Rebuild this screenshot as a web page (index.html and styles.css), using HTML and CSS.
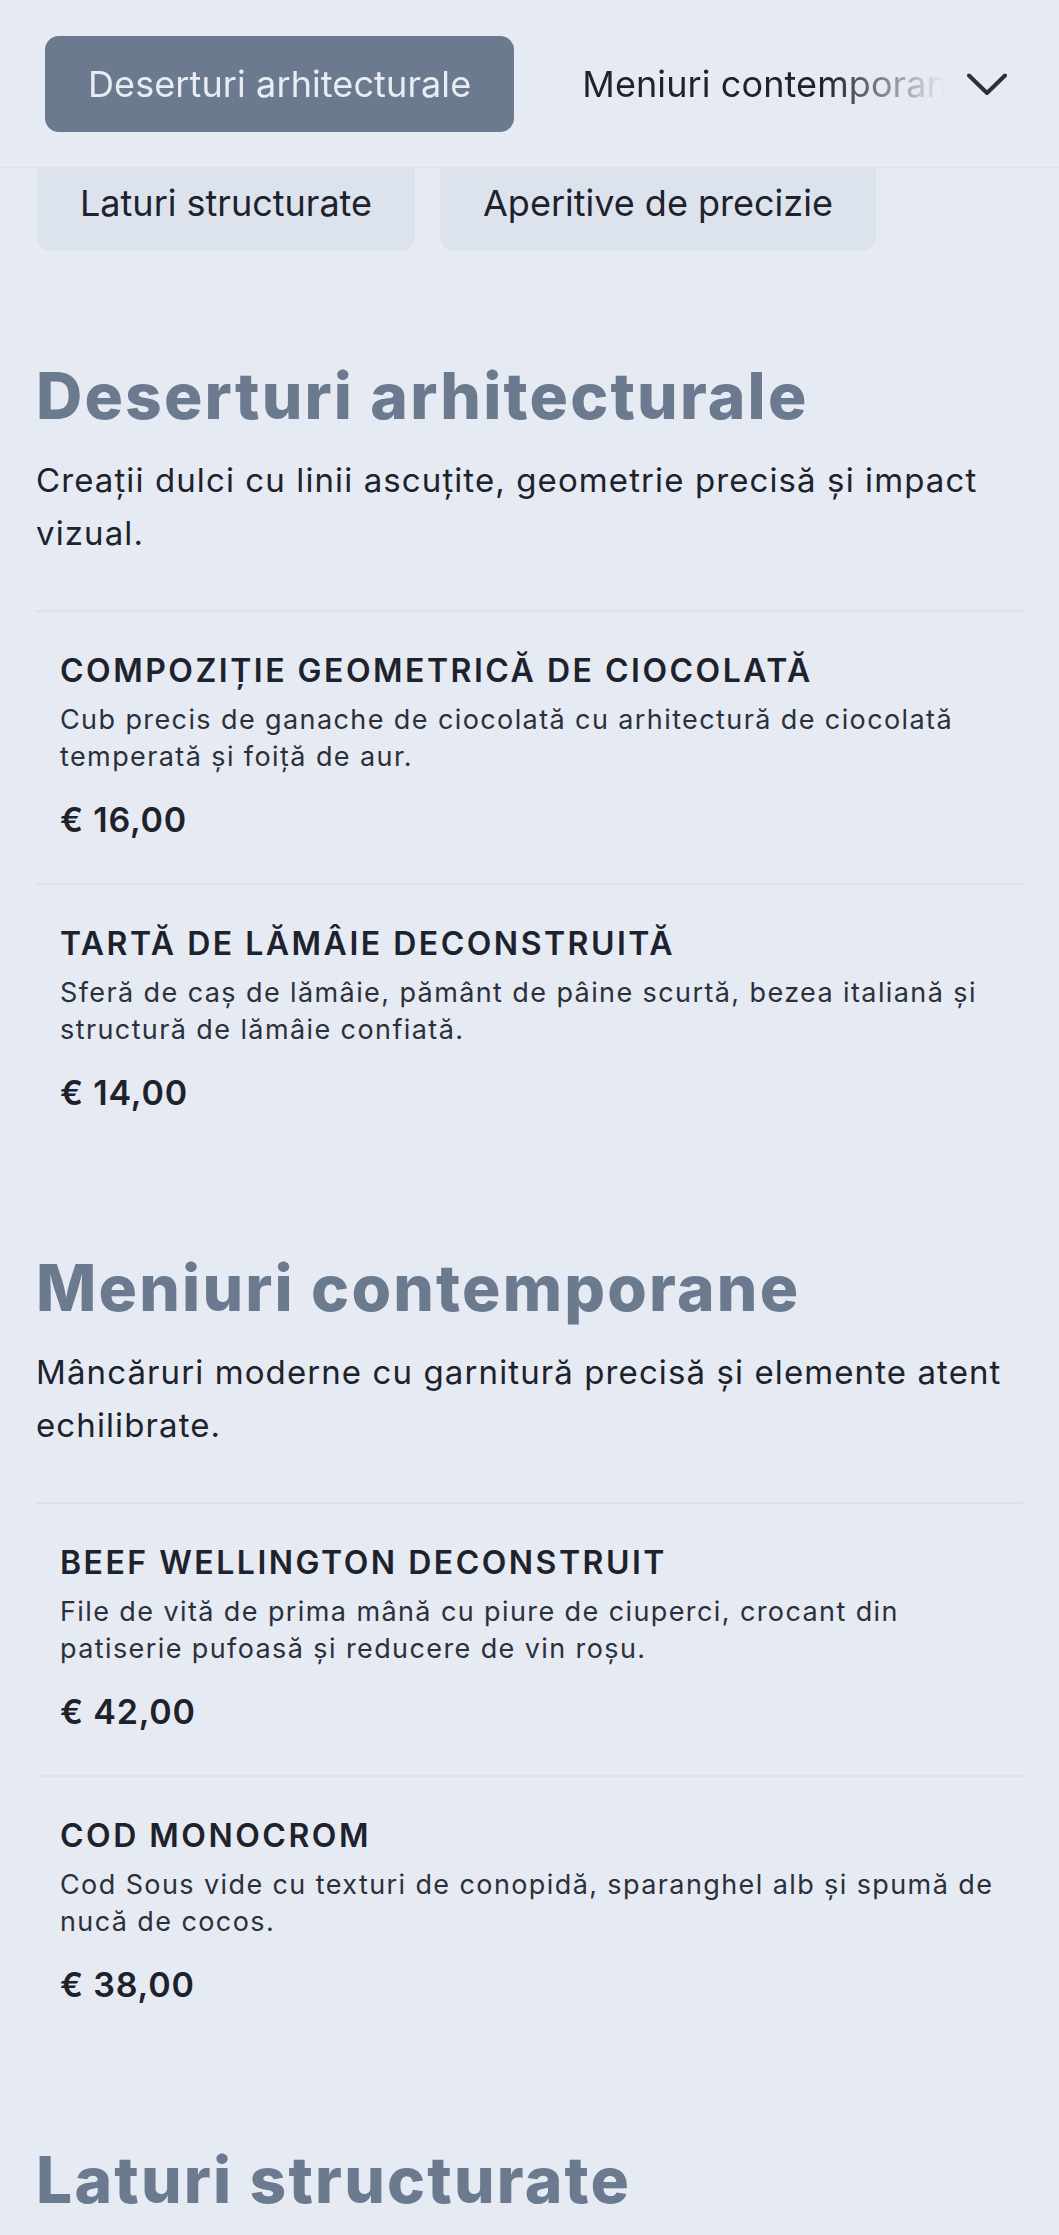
FILE: index.html
```html
<!DOCTYPE html>
<html lang="ro">
<head>
<meta charset="utf-8">
<title>Meniu</title>
<link rel="stylesheet" href="styles.css">
</head>
<body>
<header class="topbar">
  <nav class="tabs">
    <button class="tab tab-active">Deserturi arhitecturale</button>
    <button class="tab">Meniuri contemporane</button>
    <button class="tab">Laturi structurate</button>
  </nav>
  <button class="toggle" aria-label="Deschide categoriile">
    <svg class="chevron" width="40" height="23" viewBox="0 0 40 23" fill="none" stroke="currentColor" stroke-width="4" stroke-linecap="round" stroke-linejoin="round"><polyline points="2,2.5 20,20 38,2.5"/></svg>
  </button>
</header>
<div class="subnav">
  <button class="chip">Laturi structurate</button>
  <button class="chip">Aperitive de precizie</button>
</div>
<main class="menu">
  <section class="category">
    <h2 class="category-title">Deserturi arhitecturale</h2>
    <p class="category-desc">Creații dulci cu linii ascuțite, geometrie precisă și impact vizual.</p>
    <ul class="items">
      <li class="item">
        <h3 class="item-name">Compoziție geometrică de ciocolată</h3>
        <p class="item-desc">Cub precis de ganache de ciocolată cu arhitectură de ciocolată temperată și foiță de aur.</p>
        <p class="item-price">€ 16,00</p>
      </li>
      <li class="item">
        <h3 class="item-name">Tartă de lămâie deconstruită</h3>
        <p class="item-desc">Sferă de caș de lămâie, pământ de pâine scurtă, bezea italiană și structură de lămâie confiată.</p>
        <p class="item-price">€ 14,00</p>
      </li>
    </ul>
  </section>
  <section class="category">
    <h2 class="category-title">Meniuri contemporane</h2>
    <p class="category-desc">Mâncăruri moderne cu garnitură precisă și elemente atent echilibrate.</p>
    <ul class="items">
      <li class="item">
        <h3 class="item-name">Beef Wellington deconstruit</h3>
        <p class="item-desc">File de vită de prima mână cu piure de ciuperci, crocant din patiserie pufoasă și reducere de vin roșu.</p>
        <p class="item-price">€ 42,00</p>
      </li>
      <li class="item">
        <h3 class="item-name">Cod monocrom</h3>
        <p class="item-desc">Cod Sous vide cu texturi de conopidă, sparanghel alb și spumă de nucă de cocos.</p>
        <p class="item-price">€ 38,00</p>
      </li>
    </ul>
  </section>
  <section class="category">
    <h2 class="category-title">Laturi structurate</h2>
    <p class="category-desc">Garnituri construite cu atenție la formă și textură.</p>
  </section>
</main>
</body>
</html>
```
FILE: styles.css
```css
* { box-sizing: border-box; }

html, body {
  margin: 0;
  padding: 0;
  background: #e6eaf2;
  color: #1d222c;
  font-family: Inter, "Noto Sans", "Liberation Sans", sans-serif;
}

button {
  font-family: inherit;
  border: 0;
  margin: 0;
  cursor: pointer;
}

.topbar {
  position: sticky;
  top: 0;
  z-index: 5;
  display: flex;
  align-items: center;
  height: 168px;
  padding: 36px 36px 35px 45px;
  background: #e6eaf2;
  border-bottom: 1px solid #dfe4ec;
}

.tabs {
  flex: 1;
  min-width: 0;
  display: flex;
  gap: 25px;
  overflow: hidden;
  -webkit-mask-image: linear-gradient(to right, #000 calc(100% - 120px), transparent 100%);
  mask-image: linear-gradient(to right, #000 calc(100% - 120px), transparent 100%);
}

.tab {
  flex: none;
  height: 96px;
  padding: 0 43px;
  border-radius: 14px;
  background: transparent;
  color: #1d222c;
  font-size: 36px;
  line-height: 54px;
  letter-spacing: 0.1px;
  white-space: nowrap;
}

.tab-active {
  background: #6b7a8f;
  color: #e8ecf3;
}

.toggle {
  flex: none;
  width: 72px;
  height: 72px;
  margin-left: 6px;
  display: flex;
  align-items: center;
  justify-content: center;
  background: transparent;
  color: #2a303c;
  padding: 0;
}

.chevron { display: block; }

.subnav {
  display: flex;
  gap: 25px;
  margin-top: -13px;
  padding: 0 37px;
}

.chip {
  height: 96px;
  padding: 0 43px;
  border-radius: 14px;
  background: #dde3ec;
  color: #1d222c;
  font-size: 36px;
  line-height: 54px;
  white-space: nowrap;
}

.menu {
  padding: 107px 36px 0;
}

.category {
  margin-bottom: 94px;
}

.category-title {
  margin: 0 0 19px;
  font-size: 64px;
  line-height: 1.2;
  font-weight: 800;
  color: #6b7a8f;
  letter-spacing: 2.2px;
}

.category-desc {
  margin: 0 0 50px;
  font-size: 33px;
  line-height: 53px;
  letter-spacing: 1.1px;
  color: #1d222c;
}

.items {
  list-style: none;
  margin: 0;
  padding: 0;
}

.item {
  border-top: 2px solid #dde2ea;
  padding: 38px 24px 40px;
}

.item-name {
  margin: 0 0 9px;
  font-size: 32px;
  line-height: 42px;
  font-weight: 600;
  text-transform: uppercase;
  letter-spacing: 2.5px;
  color: #1d222c;
}

.item-desc {
  margin: 0 0 22px;
  font-size: 27px;
  line-height: 37px;
  letter-spacing: 1.4px;
  color: #2b303b;
}

.item-price {
  margin: 0;
  font-size: 34px;
  line-height: 46px;
  font-weight: 600;
  letter-spacing: 0.8px;
  color: #1d222c;
}
```
